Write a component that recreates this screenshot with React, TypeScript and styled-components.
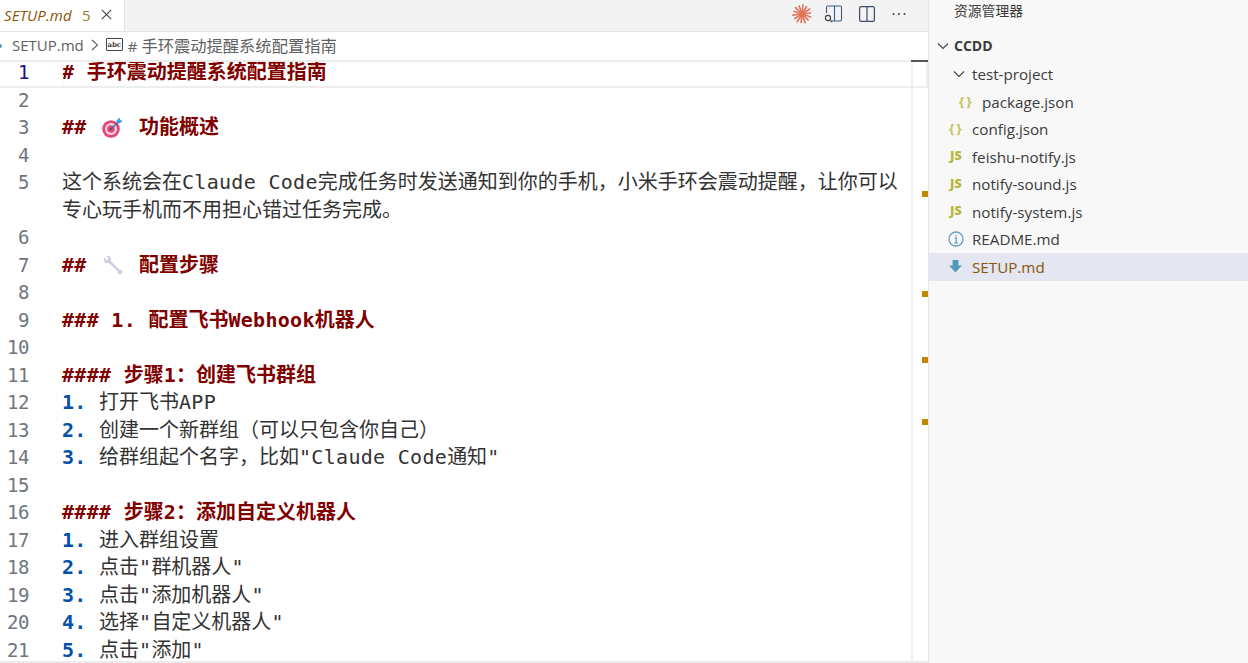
import React from "react";
import styled, { createGlobalStyle } from "styled-components";

const Global = createGlobalStyle`
  html, body { margin: 0; padding: 0; width: 1248px; height: 663px; overflow: hidden; background: #fff; }
  * { box-sizing: border-box; }
`;

const UI = `"Open Sans", "Noto Sans CJK SC", sans-serif`;
const MONO = `"DejaVu Sans Mono", "Noto Sans CJK SC", monospace`;

const Page = styled.div`
  position: relative;
  display: flex;
  width: 1248px;
  height: 663px;
  overflow: hidden;
  font-family: ${UI};
`;
const EditorPane = styled.div`
  position: relative;
  width: 928px;
  height: 663px;
  display: flex;
  flex-direction: column;
  border-bottom: 2px solid #ececec;
`;
const TabBar = styled.div`
  height: 32px;
  flex: none;
  display: flex;
  justify-content: space-between;
  background: #f3f3f3;
  border-bottom: 1px solid #e5e5e5;
`;
const Tab = styled.div`
  width: 125px;
  height: 31px;
  background: #fff;
  border-right: 1px solid #e5e5e5;
  display: flex;
  align-items: center;
  padding: 0 0 2px 4px;
  font-size: 15px;
`;
const TabName = styled.span`
  font-style: italic;
  color: #895503;
  letter-spacing: 0.1px;
  width: 78px;
`;
const TabCount = styled.span`
  color: #895503;
  opacity: 0.8;
  width: 19px;
`;
const TabActions = styled.div`
  display: flex;
  align-items: center;
  height: 31px;
  gap: 11px;
  padding: 0 20px 3px 0;
`;
const ActionSlot = styled.span<{ $ml?: number }>`
  display: flex;
  margin-left: ${(p) => p.$ml ?? 0}px;
`;
const Crumbs = styled.div`
  height: 27px;
  flex: none;
  display: flex;
  align-items: center;
  padding: 0 0 1px 12px;
  font-size: 15px;
  color: #616161;
  white-space: nowrap;
`;
const CrumbDot = styled.span`
  position: absolute;
  left: -2px;
  top: 44px;
  width: 4px;
  height: 4px;
  background: #519aba;
  border-radius: 50%;
`;
const CrumbCjk = styled.span`
  font-size: 16.3px;
`;
const ChevronSlot = styled.span`
  display: flex;
  margin-left: 6px;
`;
const AbcBox = styled.span`
  width: 17px;
  height: 13px;
  margin: 0 5px 2px 6px;
  border: 1px solid #424242;
  border-radius: 1px;
  display: flex;
  align-items: center;
  justify-content: center;
  font: 700 7px "DejaVu Serif", serif;
  color: #424242;
`;
const EditorBody = styled.div`
  flex: 1;
  display: flex;
  min-height: 0;
  overflow: hidden;
`;
const Lines = styled.div`
  width: 911px;
  flex: none;
  font-family: ${MONO};
  font-size: 20px;
  color: #333;
`;
const Row = styled.div`
  display: flex;
  min-height: 27.5px;
  line-height: 27.5px;
`;
const Num = styled.div<{ $active?: boolean }>`
  width: 29px;
  flex: none;
  text-align: right;
  color: ${(p) => (p.$active ? "#171184" : "#6e7681")};
  font-family: "DejaVu Sans Mono", monospace;
  font-size: 19px;
  letter-spacing: -0.4px;
`;
const Code = styled.div`
  margin-left: 33px;
  width: 846px;
  white-space: pre-wrap;
  word-break: break-all;
`;
const Lat = styled.span`
  letter-spacing: 0.3px;
`;
const Head = styled.span`
  color: #800000;
  font-weight: 700;
`;
const ListNo = styled.span`
  color: #0451a5;
  font-weight: 700;
  letter-spacing: 0.3px;
`;
const EmojiSlot = styled.span`
  display: inline-flex;
  width: 27.7px;
  height: 22px;
  padding-left: 3px;
  vertical-align: -4px;
  align-items: center;
`;
const Ruler = styled.div`
  position: relative;
  width: 17px;
  flex: none;
  border-left: 2px solid #f0f0f0;
`;
const Mark = styled.div<{ $y: number }>`
  position: absolute;
  right: 0;
  top: ${(p) => p.$y}px;
  width: 6px;
  height: 6px;
  background: #bf8803;
`;
const LineHighlight = styled.div`
  position: absolute;
  left: 0;
  right: 0;
  top: 60px;
  height: 28px;
  border-top: 2px solid #eeeeee;
  border-bottom: 2px solid #eeeeee;
  border-right: 2px solid #eeeeee;
  pointer-events: none;
`;
const GutterSep = styled.div`
  position: absolute;
  left: 62px;
  top: 62px;
  width: 1px;
  height: 24px;
  background: #f3f3f3;
`;
const RulerCursor = styled.div`
  position: absolute;
  left: 911px;
  right: 0;
  top: 60px;
  height: 2px;
  background: #555;
`;
const Sidebar = styled.aside`
  width: 320px;
  height: 663px;
  flex: none;
  background: #f8f8f8;
  border-left: 1px solid #e5e5e5;
  color: #3b3b3b;
`;
const SideTitle = styled.div`
  height: 33px;
  padding: 3px 0 0 25px;
  font-size: 13.8px;
  line-height: 16px;
  color: #3b3b3b;
`;
const TreeRow = styled.div<{ $indent: number; $selected?: boolean; $bold?: boolean; $color?: string }>`
  display: flex;
  align-items: center;
  height: 27.5px;
  padding-left: ${(p) => p.$indent}px;
  padding-bottom: ${(p) => (p.$bold ? 2 : 0)}px;
  background: ${(p) => (p.$selected ? "#e4e6f1" : "transparent")};
  color: ${(p) => p.$color ?? "#3b3b3b"};
  font-weight: ${(p) => (p.$bold ? 700 : 400)};
  font-size: ${(p) => (p.$bold ? "14px" : "15.2px")};
`;
const IconSlot = styled.span<{ $w: number }>`
  width: ${(p) => p.$w}px;
  flex: none;
  display: flex;
  align-items: center;
`;
const JsonIcon = styled.span`
  font: 700 13px "Open Sans", sans-serif;
  color: #c2c25a;
  word-spacing: -1px;
  white-space: pre;
  position: relative;
  top: -1px;
`;
const JsIcon = styled.span`
  font: 800 12.5px "Open Sans", sans-serif;
  color: #b7b73b;
  position: relative;
  left: 2px;
  top: -1px;
`;

const Chevron = ({ s = 12 }: { s?: number }) => (
  <svg width={s} height={s} viewBox="0 0 12 12" fill="none" stroke="#424242" strokeWidth="1.1">
    <path d="M1 3.500 6 8.500 11 3.500" />
  </svg>
);
const CrumbChevron = () => (
  <svg width="10" height="12" viewBox="0 0 10 12" fill="none" stroke="#616161" strokeWidth="1.1">
    <path d="M2 1 7.500 6 2 11" />
  </svg>
);
const Sparkle = () => {
  const spokes = Array.from({ length: 14 }, (_, i) => (i * 360) / 14 + 6);
  return (
    <svg width="20" height="20" viewBox="0 0 20 20" stroke="#e0765a" strokeWidth="1.7" strokeLinecap="round">
      {spokes.map((a, i) => (
        <line key={a} x1="10" y1="10" x2="10" y2={i % 2 ? 1.5 : 0.8} transform={`rotate(${a} 10 10)`} />
      ))}
    </svg>
  );
};
const BookSearch = () => (
  <svg width="20" height="20" viewBox="0 0 20 20" fill="none" stroke="#424242" strokeWidth="1.1">
    <path d="M3.500 9V3.500A1.500 1.500 0 0 1 5 2h12a1.500 1.500 0 0 1 1.500 1.500v12A1.500 1.500 0 0 1 17 17H9" stroke="#3d5a80" />
    <path d="M11.500 2v15" stroke="#3d5a80" />
    <circle cx="5" cy="14" r="2.600" />
    <path d="M7 16 9 18" />
  </svg>
);
const SplitIcon = () => (
  <svg width="18" height="18" viewBox="0 0 18 18" fill="none" stroke="#3d4a66" strokeWidth="1.2">
    <rect x="1.600" y="1.600" width="14.800" height="14.800" rx="1.600" />
    <path d="M9 1.600v14.800" />
  </svg>
);
const Dots = () => (
  <svg width="18" height="18" viewBox="0 0 18 18" fill="#424242">
    <circle cx="3.500" cy="9" r="1" />
    <circle cx="9" cy="9" r="1" />
    <circle cx="14.500" cy="9" r="1" />
  </svg>
);
const CloseX = () => (
  <svg width="11" height="11" viewBox="0 0 11 11" fill="none" stroke="#424242" strokeWidth="1.1">
    <path d="M.8.8l9.400 9.400M10.200.8.800 10.200" />
  </svg>
);
const Target = () => (
  <svg width="21" height="21" viewBox="0 0 21 21">
    <circle cx="9" cy="12" r="8.800" fill="#e2487c" />
    <circle cx="9" cy="12" r="6" fill="#f8d5e0" />
    <circle cx="9" cy="12" r="3.800" fill="#e2487c" />
    <circle cx="9" cy="12" r="1.300" fill="#8a2c50" />
    <path d="M9 12 17 4.500" stroke="#3b6ea5" strokeWidth="1.400" />
    <path d="M14 4 17.500 .5l.6 2.600 2.600.6-3.500 3z" fill="#38a3e0" />
  </svg>
);
const Wrench = () => (
  <svg width="21" height="21" viewBox="0 0 21 21">
    <path
      d="M2 2.500 4.800 5.500 6.800 3.600 4.400 1C6.800.4 9 1.800 9 4.400c0 .6 0 1.100-.3 1.600l9.300 8.900c1.600-.3 2.500.7 2.400 1.900-.1 1.800-2 2.900-3.500 2.400-1.200-.6-1.600-1.800-1.100-3L6.600 7.700C4.200 8.900 1.200 7 2 2.500z"
      fill="#cfcbe2"
    />
  </svg>
);
const MdArrow = () => (
  <svg width="15" height="15" viewBox="0 0 15 15">
    <path d="M4.600 1h5.800v5.500h3.500L7.500 13.500 1.100 6.500h3.500z" fill="#519aba" />
  </svg>
);
const InfoIcon = () => (
  <svg width="16" height="16" viewBox="0 0 16 16" fill="none">
    <circle cx="8" cy="8" r="7" stroke="#6a9fc0" strokeWidth="1.300" />
    <path d="M8 4v1.600M6.500 7.200H8.300V11.800M6.200 11.800h4" stroke="#6a9fc0" strokeWidth="1.300" />
  </svg>
);

const H = ({ children }: { children: React.ReactNode }) => <Head>{children}</Head>;
const L = ({ n, children }: { n: number; children: React.ReactNode }) => (
  <>
    <ListNo>{n}. </ListNo>
    {children}
  </>
);

const content: React.ReactNode[] = [
  <H><Lat># </Lat>手环震动提醒系统配置指南</H>,
  "",
  <H>
    <Lat>## </Lat><EmojiSlot><Target /></EmojiSlot><Lat> </Lat>功能概述
  </H>,
  "",
  <>这个系统会在<Lat>Claude Code</Lat>完成任务时发送通知到你的手机，小米手环会震动提醒，让你可以专心玩手机而不用担心错过任务完成。</>,
  "",
  <H>
    <Lat>## </Lat><EmojiSlot><Wrench /></EmojiSlot><Lat> </Lat>配置步骤
  </H>,
  "",
  <H><Lat>### 1. </Lat>配置飞书<Lat>Webhook</Lat>机器人</H>,
  "",
  <H><Lat>#### </Lat>步骤<Lat>1</Lat>：创建飞书群组</H>,
  <L n={1}>打开飞书<Lat>APP</Lat></L>,
  <L n={2}>创建一个新群组（可以只包含你自己）</L>,
  <L n={3}>给群组起个名字，比如<Lat>"Claude Code</Lat>通知<Lat>"</Lat></L>,
  "",
  <H><Lat>#### </Lat>步骤<Lat>2</Lat>：添加自定义机器人</H>,
  <L n={1}>进入群组设置</L>,
  <L n={2}>点击<Lat>"</Lat>群机器人<Lat>"</Lat></L>,
  <L n={3}>点击<Lat>"</Lat>添加机器人<Lat>"</Lat></L>,
  <L n={4}>选择<Lat>"</Lat>自定义机器人<Lat>"</Lat></L>,
  <L n={5}>点击<Lat>"</Lat>添加<Lat>"</Lat></L>,
];

const marks = [132, 232, 298, 360];

const files: { name: string; icon: React.ReactNode }[] = [
  { name: "feishu-notify.js", icon: <JsIcon>JS</JsIcon> },
  { name: "notify-sound.js", icon: <JsIcon>JS</JsIcon> },
  { name: "notify-system.js", icon: <JsIcon>JS</JsIcon> },
  { name: "README.md", icon: <InfoIcon /> },
];

export default function App() {
  return (
    <Page>
      <Global />
      <EditorPane>
        <TabBar>
          <Tab>
            <TabName>SETUP.md</TabName>
            <TabCount>5</TabCount>
            <CloseX />
          </Tab>
          <TabActions>
            <Sparkle />
            <BookSearch />
            <ActionSlot $ml={4}>
              <SplitIcon />
            </ActionSlot>
            <ActionSlot $ml={3}>
              <Dots />
            </ActionSlot>
          </TabActions>
        </TabBar>
        <Crumbs>
          <CrumbDot />
          <span>SETUP.md</span>
          <ChevronSlot>
            <CrumbChevron />
          </ChevronSlot>
          <AbcBox>abc</AbcBox>
          <span>
            #&nbsp;<CrumbCjk>手环震动提醒系统配置指南</CrumbCjk>
          </span>
        </Crumbs>
        <EditorBody>
          <Lines>
            {content.map((c, i) => (
              <Row key={i}>
                <Num $active={i === 0}>{i + 1}</Num>
                <Code>{c}</Code>
              </Row>
            ))}
          </Lines>
          <Ruler>
            {marks.map((y) => (
              <Mark key={y} $y={y} />
            ))}
          </Ruler>
        </EditorBody>
        <LineHighlight />
        <GutterSep />
        <RulerCursor />
      </EditorPane>
      <Sidebar>
        <SideTitle>资源管理器</SideTitle>
        <TreeRow $indent={8} $bold>
          <IconSlot $w={17}>
            <Chevron />
          </IconSlot>
          CCDD
        </TreeRow>
        <TreeRow $indent={24}>
          <IconSlot $w={19}>
            <Chevron />
          </IconSlot>
          test-project
        </TreeRow>
        <TreeRow $indent={30}>
          <IconSlot $w={23}>
            <JsonIcon>{"{ }"}</JsonIcon>
          </IconSlot>
          package.json
        </TreeRow>
        <TreeRow $indent={20}>
          <IconSlot $w={23}>
            <JsonIcon>{"{ }"}</JsonIcon>
          </IconSlot>
          config.json
        </TreeRow>
        {files.map((f) => (
          <TreeRow key={f.name} $indent={19}>
            <IconSlot $w={24}>{f.icon}</IconSlot>
            {f.name}
          </TreeRow>
        ))}
        <TreeRow $indent={19} $selected $color="#895503">
          <IconSlot $w={24}>
            <MdArrow />
          </IconSlot>
          SETUP.md
        </TreeRow>
      </Sidebar>
    </Page>
  );
}
